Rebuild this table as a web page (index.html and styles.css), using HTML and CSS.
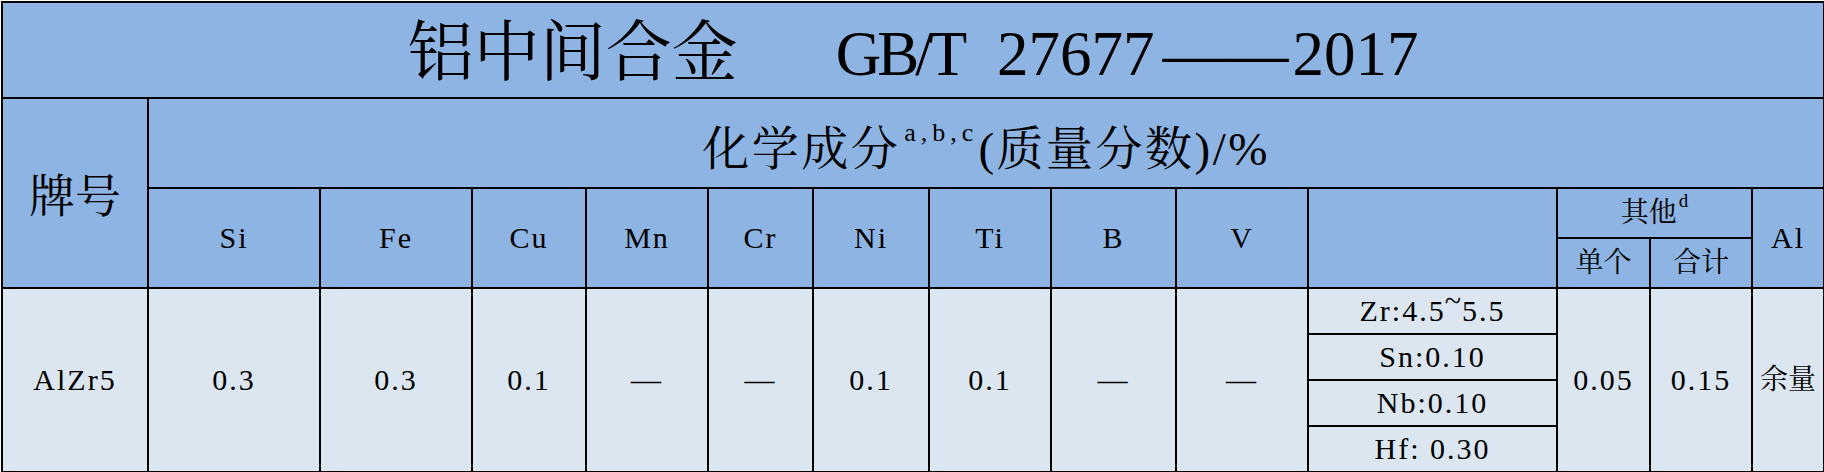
FILE: index.html
```html
<!DOCTYPE html>
<html lang="zh-CN">
<head>
<meta charset="utf-8">
<title>铝中间合金 GB/T 27677——2017</title>
<link rel="stylesheet" href="styles.css">
</head>
<body>
<table class="sheet">
  <colgroup>
    <col class="c-grade"><col class="c-si"><col class="c-fe"><col class="c-cu"><col class="c-mn"><col class="c-cr"><col class="c-ni"><col class="c-ti"><col class="c-b"><col class="c-v"><col class="c-extra"><col class="c-single"><col class="c-total"><col class="c-al">
  </colgroup>
  <tr class="row-title head">
    <td colspan="14" class="title"><span class="t-cn">铝中间合金</span><span class="t-std"><span class="t-gb">GB/T</span> 27677<span class="t-dash">——</span>2017</span></td>
  </tr>
  <tr class="row-sub head">
    <td rowspan="3" class="grade">牌号</td>
    <td colspan="13" class="chem">化学成分<span class="sup-abc">a,b,c</span>(质量分数)/%</td>
  </tr>
  <tr class="row-h1 head">
    <td rowspan="2">Si</td>
    <td rowspan="2">Fe</td>
    <td rowspan="2">Cu</td>
    <td rowspan="2">Mn</td>
    <td rowspan="2">Cr</td>
    <td rowspan="2">Ni</td>
    <td rowspan="2">Ti</td>
    <td rowspan="2">B</td>
    <td rowspan="2">V</td>
    <td rowspan="2"></td>
    <td colspan="2" class="cn">其他<span class="sup-d">d</span></td>
    <td rowspan="2">Al</td>
  </tr>
  <tr class="row-h2 head">
    <td class="cn">单个</td>
    <td class="cn">合计</td>
  </tr>
  <tr class="row-d data">
    <td rowspan="4">AlZr5</td>
    <td rowspan="4">0.3</td>
    <td rowspan="4">0.3</td>
    <td rowspan="4">0.1</td>
    <td rowspan="4">—</td>
    <td rowspan="4">—</td>
    <td rowspan="4">0.1</td>
    <td rowspan="4">0.1</td>
    <td rowspan="4">—</td>
    <td rowspan="4">—</td>
    <td>Zr:4.5<span class="tilde">~</span>5.5</td>
    <td rowspan="4">0.05</td>
    <td rowspan="4">0.15</td>
    <td rowspan="4" class="cn">余量</td>
  </tr>
  <tr class="row-d data"><td>Sn:0.10</td></tr>
  <tr class="row-d data"><td>Nb:0.10</td></tr>
  <tr class="row-d data"><td>Hf: 0.30</td></tr>
</table>
</body>
</html>
```
FILE: styles.css
```css
html, body {
  margin: 0;
  padding: 0;
  background: #ffffff;
}

.sheet {
  border-collapse: collapse;
  table-layout: fixed;
  width: 1822px;
  margin: 1px 0 0 1px;
  font-family: "Liberation Serif", "Noto Serif CJK SC", "Noto Sans CJK SC", serif;
  color: #000000;
}

.c-grade { width: 146px; }
.c-si { width: 172px; }
.c-fe { width: 152px; }
.c-cu { width: 114px; }
.c-mn { width: 122px; }
.c-cr { width: 105px; }
.c-ni { width: 116px; }
.c-ti { width: 122px; }
.c-b { width: 125px; }
.c-v { width: 132px; }
.c-extra { width: 249px; }
.c-single { width: 93px; }
.c-total { width: 102px; }
.c-al { width: 72px; }

.sheet td {
  border: 2px solid #000000;
  padding: 0;
  text-align: center;
  vertical-align: middle;
  font-family: "Liberation Serif", "Noto Serif CJK SC", "Noto Sans CJK SC", serif;
  font-size: 30px;
  letter-spacing: 2px;
  line-height: 1.15;
  white-space: nowrap;
}

.head td { background: #8db4e2; }
.data td { background: #dce6f1; }

.row-title { height: 96px; }
.row-sub { height: 90px; }
.row-h1 { height: 50px; }
.row-h2 { height: 50px; }
.row-d { height: 46px; }

.sheet td.title {
  font-size: 63px;
  letter-spacing: 0;
  padding-top: 6px;
}

.t-cn {
  font-size: 66px;
}

.t-std {
  margin-left: 98px;
  word-spacing: 18px;
}

.t-gb {
  letter-spacing: -4px;
}

.t-dash {
  margin: 0 4px 0 8px;
}

.sheet td.grade {
  font-size: 46px;
  letter-spacing: 0;
  padding-top: 8px;
}

.sheet td.chem {
  font-size: 47px;
  letter-spacing: 2.5px;
  padding-top: 12px;
}

.sup-abc {
  font-size: 26px;
  letter-spacing: 5px;
  vertical-align: top;
  line-height: 1;
  margin-left: 4px;
  position: relative;
  top: -2px;
}

.sheet td.cn {
  font-size: 28px;
  letter-spacing: 0;
}

.sup-d {
  font-size: 19px;
  vertical-align: top;
  line-height: 1;
  margin-left: 2px;
  position: relative;
  top: -6px;
}

.tilde {
  display: inline-block;
  position: relative;
  top: -10px;
  margin: 0 -1px;
}
```
